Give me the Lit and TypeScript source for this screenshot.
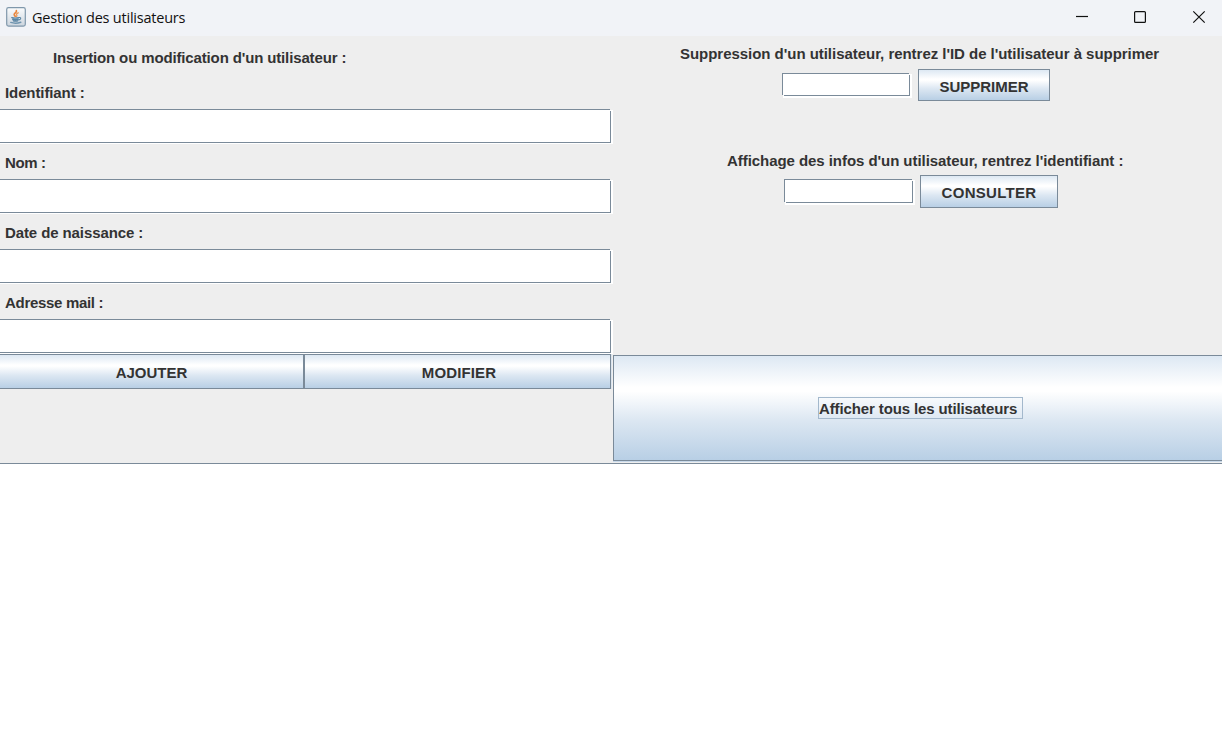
import { LitElement, html, css, svg } from "lit";
import { customElement } from "lit/decorators.js";

const javaIcon = html`<svg class="java" width="20" height="20" viewBox="0 0 20 20">
  <defs><linearGradient id="g" x1="0" y1="0" x2="0" y2="1"><stop offset="0" stop-color="#fbfcfd"/><stop offset="1" stop-color="#ccd5de"/></linearGradient></defs>
  <rect x=".7" y=".7" width="18.6" height="18.4" rx="1.8" fill="url(#g)" stroke="#7f97ab" stroke-width="1.2"/>
  <g fill="none" stroke-linecap="round">
    <path d="M10.4 3.6C11.4 5.6 7 6.2 8.3 8.1L9.3 9.4" stroke="#e8843a" stroke-width="1.7"/>
    <path d="M12.2 5.8C10 6.8 10.2 7.4 10.8 8.2Q11.3 8.9 10.4 9.6" stroke="#ec9a58" stroke-width="1.3"/>
    <path d="M5.8 10.6Q9.5 11.6 12.6 10.6M6.7 12.3Q9.5 13.2 12.2 12.3M7.3 13.8Q9.5 14.5 11.8 13.8" stroke="#5b86a5" stroke-width="1.4"/>
    <path d="M13 10.5C15.6 10 15 12.6 12.9 12.9" stroke="#5b86a5" stroke-width="1.1"/>
    <path d="M4.8 15.4Q9.5 17 14.8 15.3" stroke="#6f94af" stroke-width="1.5"/>
  </g></svg>`;

@customElement("app-root")
export class AppRoot extends LitElement {
  static styles = css`
    :host { display: block; width: 1222px; height: 755px; overflow: hidden; background: #fff; color: #333; font: bold 15px/17px "Liberation Sans", Arial, sans-serif; }
    * { box-sizing: border-box; }
    .bar { height: 36px; background: #f1f3f7; display: flex; align-items: center; padding-left: 6px; color: #111; }
    .java { margin-top: -3px; }
    .title { font: 14.5px/20px "Open Sans", "Noto Sans", sans-serif; margin-left: 6px; flex: 1; letter-spacing: -0.22px; white-space: nowrap; }
    .controls { display: flex; }
    .controls svg { display: block; }
    .panel { height: 428px; background: #eee; border-bottom: 1px solid #7a8a99; display: grid; grid-template-columns: 613px 609px; }
    .left { padding-top: 3px; }
    .lbl { height: 35px; padding: 10px 0 0 5px; white-space: nowrap; }
    .heading { padding-left: 53px; letter-spacing: -0.14px; }
    .id, .birth { letter-spacing: -0.1px; }
    .name { letter-spacing: -0.4px; }
    .mail { letter-spacing: -0.31px; }
    .field, .small {
      --line: linear-gradient(#7a8a99, #7a8a99);
      --paper: linear-gradient(#fff, #fff);
      background-repeat: no-repeat;
    }
    .field {
      width: 613px; height: 35px;
      background-image: var(--line), var(--line), var(--line), var(--paper);
      background-position: 0 0, right 2px top 2px, left 0 bottom 1px, 0 1px;
      background-size: calc(100% - 3px) 1px, 1px calc(100% - 3px), calc(100% - 2px) 1px, 100% calc(100% - 1px);
    }
    .small {
      width: 130px; height: 25px; margin-top: 4px;
      background-image: var(--line), var(--line), var(--line), var(--line), var(--paper);
      background-position: 0 0, 0 0, right 2px top 2px, left 2px bottom 2px, 1px 1px;
      background-size: calc(100% - 3px) 1px, 1px calc(100% - 3px), 1px calc(100% - 4px), calc(100% - 4px) 1px, calc(100% - 1px) calc(100% - 1px);
    }
    .btn { font: inherit; color: #333; padding: 0; border: 1px solid #7a8a99; border-radius: 0; display: flex; align-items: center; justify-content: center; white-space: nowrap;
      background: linear-gradient(#dde8f3 0%, #fff 30%, #fff 34%, #dce7f2 62%, #b8cfe5 100%); }
    .pair { display: flex; width: 612px; height: 35px; border-right: 1px solid #dbe5ef; }
    .add { width: 304px; border-left: 0; padding-top: 2px; }
    .modify { width: 307px; padding-top: 2px; padding-left: 3px; letter-spacing: 0.12px; }
    .right { display: grid; grid-template-rows: 106px 213px 107px; }
    .task { padding-top: 9px; }
    .task.view { padding-top: 10px; }
    .cap { white-space: nowrap; height: 17px; }
    .del .cap { margin-left: 67px; letter-spacing: -0.035px; }
    .view .cap { margin-left: 114px; letter-spacing: -0.055px; }
    .line { display: flex; align-items: flex-start; }
    .del .line { padding: 7px 0 0 169px; }
    .view .line { padding: 6px 0 0 171px; }
    .view .small { width: 131px; height: 26px; }
    .del .btn { width: 132px; height: 32px; margin-left: 6px; padding-top: 3px; }
    .view .btn { width: 138px; height: 33px; margin-left: 5px; padding-top: 2px; letter-spacing: 0.3px; }
    .allwrap { border-bottom: 1px solid #c8d9ea; }
    .all { width: 100%; height: 106px; border-right: 0; padding-bottom: 1px; }
    .focus { border: 1px solid #a3b8cc; width: 205px; height: 22px; text-align: left; padding-top: 2px; margin-left: 5px; letter-spacing: -0.12px; }
  `;

  private fields = [
    { label: "Identifiant :", cls: "id" },
    { label: "Nom :", cls: "name" },
    { label: "Date de naissance :", cls: "birth" },
    { label: "Adresse mail :", cls: "mail" },
  ];

  render() {
    return html`
      <div class="bar">${javaIcon}<span class="title">Gestion des utilisateurs</span>
        <div class="controls"><svg width="160" height="36" fill="none" stroke="#111" stroke-width="1.2">
          ${svg`<path d="M14 16.5h12"/><rect x="72.6" y="11.6" width="10.8" height="10.8" rx="1"/><path d="M131.3 11.3l11.4 11.4M142.7 11.3l-11.4 11.4"/>`}
        </svg></div>
      </div>
      <div class="panel">
        <div class="left">
          <div class="lbl heading">Insertion ou modification d'un utilisateur :</div>
          ${this.fields.map((f) => html`<div class="lbl ${f.cls}">${f.label}</div><div class="field"></div>`)}
          <div class="pair"><button class="btn add">AJOUTER</button><button class="btn modify">MODIFIER</button></div>
        </div>
        <div class="right">
          <div class="task del">
            <div class="cap">Suppression d'un utilisateur, rentrez l'ID de l'utilisateur à supprimer</div>
            <div class="line"><div class="small"></div><button class="btn">SUPPRIMER</button></div>
          </div>
          <div class="task view">
            <div class="cap">Affichage des infos d'un utilisateur, rentrez l'identifiant :</div>
            <div class="line"><div class="small"></div><button class="btn">CONSULTER</button></div>
          </div>
          <div class="allwrap"><button class="btn all"><span class="focus">Afficher tous les utilisateurs</span></button></div>
        </div>
      </div>`;
  }
}
